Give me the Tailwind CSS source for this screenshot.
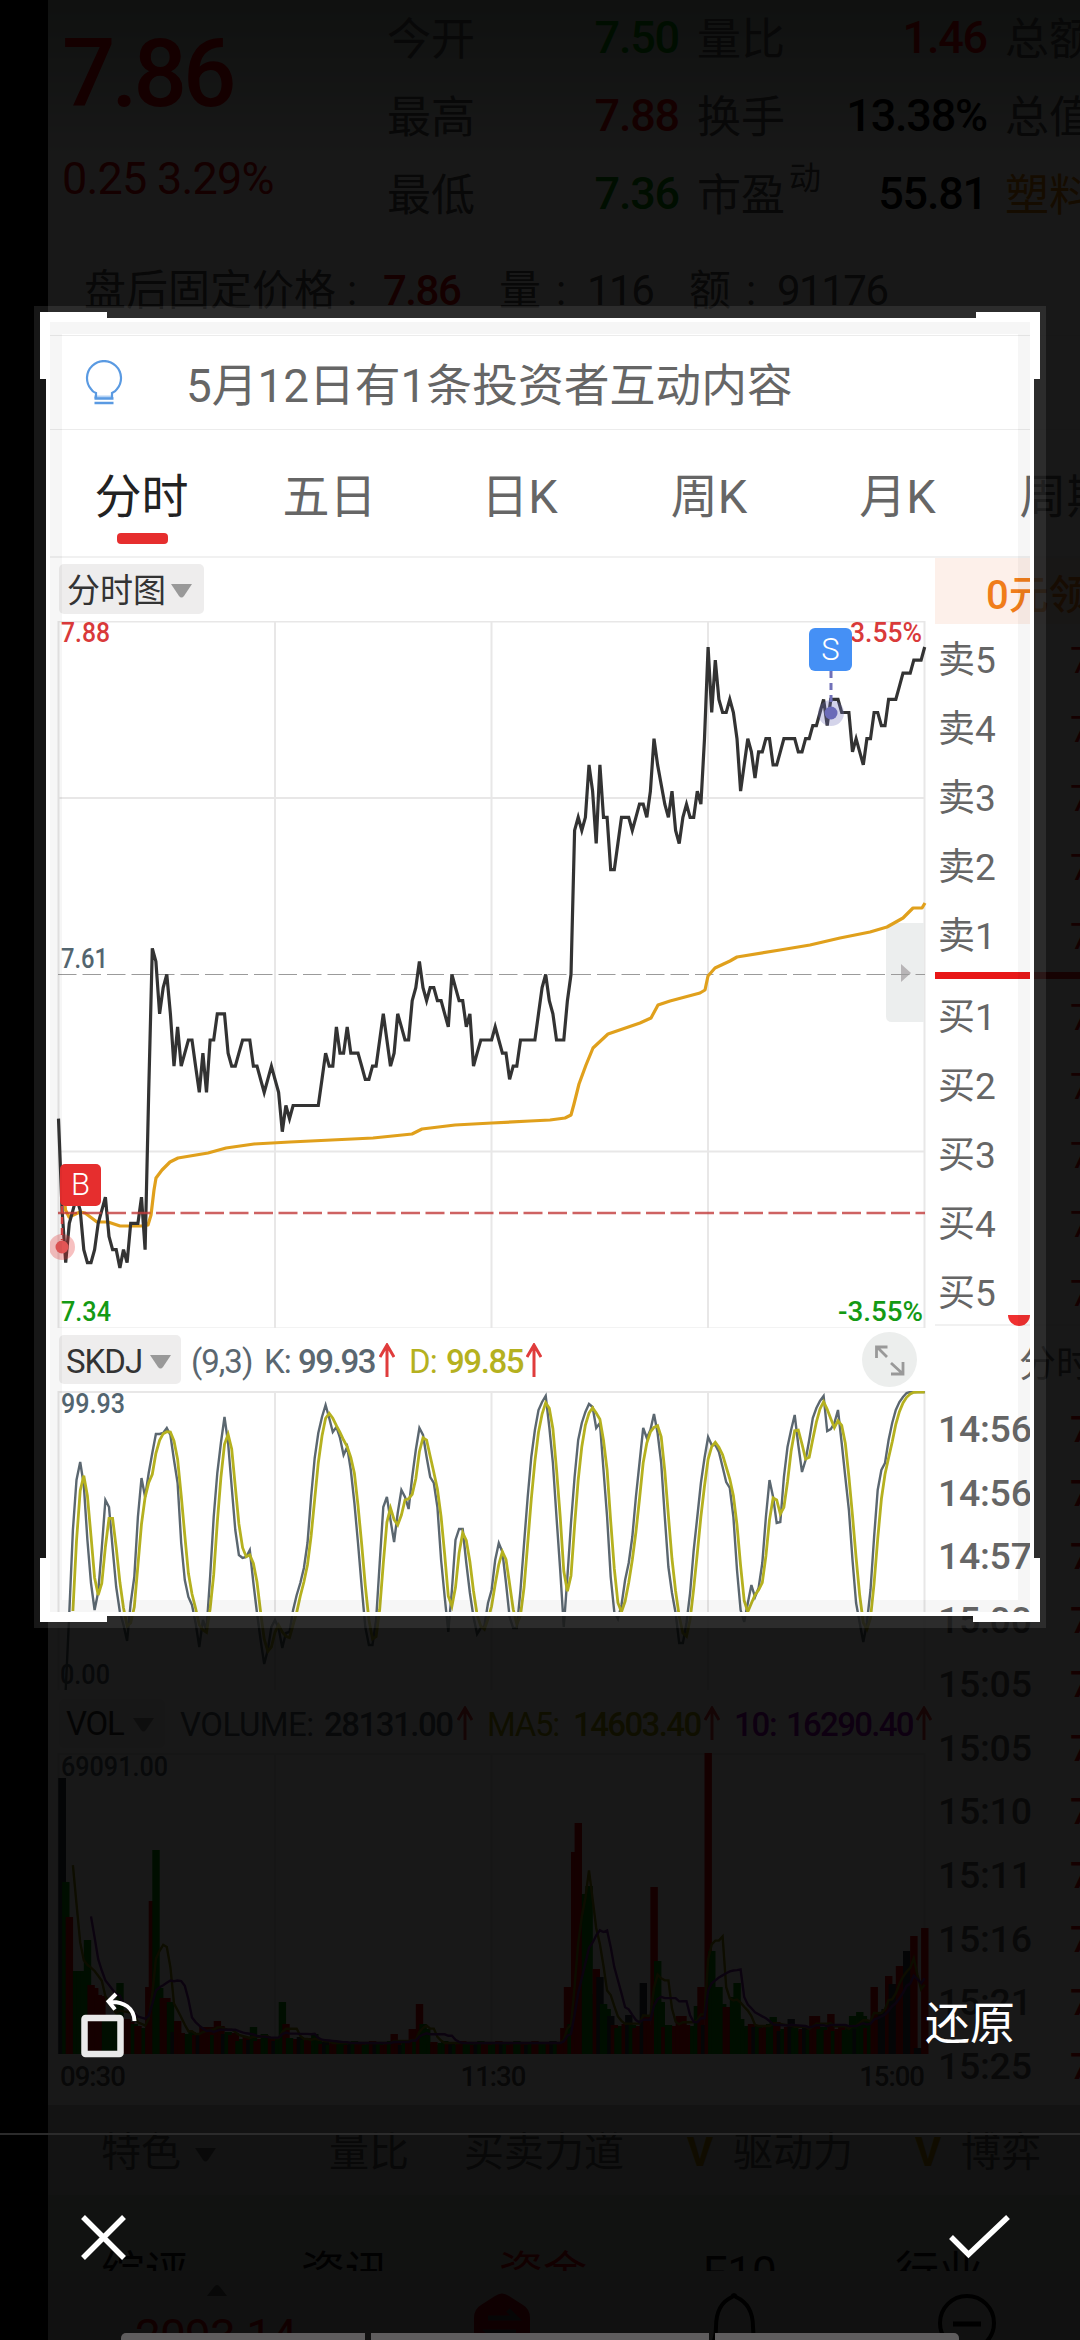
<!DOCTYPE html>
<html lang="zh-CN">
<head>
    <meta charset="UTF-8">
    <meta name="viewport" content="width=device-width, initial-scale=1.0">
    <title>裁剪</title>
    <script src="https://cdn.jsdelivr.net/npm/@tailwindcss/browser@4"></script>
</head>
<body class="bg-black">
<div class="relative w-[1080px] h-[2340px] overflow-hidden bg-black font-['Roboto','Noto_Sans_CJK_SC',sans-serif]">

    <!-- stock page -->
    <div class="ml-12 h-full bg-white flex flex-col whitespace-nowrap overflow-hidden text-[#555]">

        <!-- quote header -->
        <header class="h-[335px] shrink-0 bg-linear-to-b from-[#a4b2a8] to-white to-50%">
            <div class="flex h-[234px]">
                <div class="w-[339px] shrink-0 pl-[14px] text-[#d80000]">
                    <div class="h-[145px] pt-[7px] text-[94px] leading-[135px] font-medium tracking-[-4px]">7.86</div>
                    <div class="text-[45px] leading-[68px] tracking-[-0.8px]">0.25 3.29%</div>
                </div>
                <div class="grid grid-cols-[100px_192px_108px_200px_100px] grid-rows-3 text-[44px] leading-[80px] shrink-0">
                    <span>今开</span><span class="text-right font-medium text-[#009000] text-[45px] tracking-[-1.2px] leading-[76px]">7.50</span><span class="pl-[18px]">量比</span><span class="text-right font-medium text-[#d80000] text-[45px] tracking-[-1.2px] leading-[76px]">1.46</span><span class="pl-[18px]">总额</span>
                    <span>最高</span><span class="text-right font-medium text-[#d80000] text-[45px] tracking-[-1.2px] leading-[76px]">7.88</span><span class="pl-[18px]">换手</span><span class="text-right font-medium text-black text-[45px] tracking-[-1.2px] leading-[76px]">13.38%</span><span class="pl-[18px]">总值</span>
                    <span>最低</span><span class="text-right font-medium text-[#009000] text-[45px] tracking-[-1.2px] leading-[76px]">7.36</span><span class="pl-[18px] flex">市盈<sup class="text-[32px] leading-[44px] top-0 pl-1">动</sup></span><span class="text-right font-medium text-black text-[45px] tracking-[-1.2px] leading-[76px]">55.81</span><span class="pl-[18px] text-[#e08000]">塑料</span>
                </div>
            </div>
            <div class="flex pt-[24px] pl-9 text-[42px] leading-[66px]">
                <span class="w-[263px]">盘后固定价格</span><span class="w-[36px]">:</span>
                <span class="w-[116px] font-medium text-[#d80000] tracking-[-1.5px]">7.86</span>
                <span class="w-[57px]">量</span><span class="w-[31px]">:</span>
                <span class="w-[102px] tracking-[-1.5px]">116</span>
                <span class="w-[57px]">额</span><span class="w-[31px]">:</span>
                <span class="tracking-[-1.5px]">91176</span>
            </div>
        </header>

        <!-- tip -->
        <div class="h-[95px] shrink-0 border-y border-[#ececec] flex items-center">
            <svg class="ml-[37px] w-[38px] h-[46px]" viewBox="85 360 38 46" fill="none" stroke="#5a9ae2" stroke-width="2.200">
                <path d="M94 395.500h18v3H94z" fill="#b4d2f4" stroke="none" />
                <path d="M96 398v-5c-3-1-4-2-5-4A17 17 0 1 1 117 389c-1 2-3 3-5 4v5" />
                <path d="M94.500 398.500H113.500M94.500 403H113.500" stroke-width="2.600" />
            </svg>
            <span class="ml-[63px] pt-[10px] text-[45.800px] text-[#666]">5月12日有1条投资者互动内容</span>
        </div>

        <!-- period tabs -->
        <nav class="h-[128px] shrink-0 border-b-2 border-[#f1f1f1] flex text-[47px] leading-[133px] text-[#666] text-center">
            <div class="w-[187px] shrink-0 relative text-[#222]">分时<i class="absolute left-[69px] top-[103px] w-[51px] h-[11px] rounded-[4px] bg-[#e62e2e]"></i></div>
            <div class="w-[189px] shrink-0">五日</div>
            <div class="w-[191px] shrink-0">日K</div>
            <div class="w-[188px] shrink-0">周K</div>
            <div class="w-[189px] shrink-0">月K</div>
            <div class="w-[149px] shrink-0">周期</div>
        </nav>

        <div class="flex h-[1547px] shrink-0">
            <!-- charts -->
            <div class="w-[887px] shrink-0">
                <div class="h-[63px] pl-[11px] pt-[6px]">
                    <div class="w-[145px] h-[50px] bg-[#eeeded] rounded-[5px] flex items-center pl-2 gap-1 text-[33px] text-[#333]"><span class="pt-1">分时图</span>
                        <svg class="w-[24px] h-[14px] mt-[3px]" viewBox="0 0 24 14"><path d="M1 0h21l-8 12q-2.500 3-5 0z" fill="#999" /></svg>
                    </div>
                </div>
                <svg class="block w-[887px] h-[707px]" viewBox="48 621 887 707" fill="none">
                    <path d="M58.500 621.500H924.500V1328.500H58.500zM58 798H925M58 1151.500H925M275 621V1328M491.500 621V1328M708 621V1328" stroke="#e8e7e7" stroke-width="2" />
                    <path d="M886 929q0-6 6-6h32v99h-32q-6 0-6-6z" fill="#eceeee" />
                    <path d="M901 964l10 9-10 9z" fill="#b8b5b7" />
                    <path d="M58 974.500H925" stroke="#9b9b9b" stroke-width="1.200" stroke-dasharray="18.500 6" />
                    <polyline stroke="#e0a01c" stroke-width="3.200" stroke-linejoin="round" points="64.500,1200 65.500,1210 69,1217 80,1212 85,1213 97,1222 108,1222 120,1226 142,1226 148,1225 151,1215 154,1190 156,1178 162,1170 170,1162 178,1158 208,1153 226,1148 254,1144 290,1142 373,1138 412,1134 422,1129 455,1125 492,1123 530,1121 550,1120 565,1118 571,1115 574,1104 579,1084 586,1065 593,1048 608,1034 640,1023 651,1018 658,1005 670,1001 700,993 705,990 708,976 715,968 730,961 737,957 780,950 810,945 840,938 870,932 887,927 903,918 913,908 922,908 925,903" />
                    <polyline id="price" stroke="#333" stroke-width="3.200" />
                    <path d="M58 1213H925" stroke="#c23b3b" stroke-opacity=".8" stroke-width="2.600" stroke-dasharray="19 5.500" />
                    <g font-size="27.500" font-weight="500">
                        <text x="61" y="642" fill="#d93a3a" textLength="49" lengthAdjust="spacingAndGlyphs">7.88</text>
                        <text x="61" y="968" fill="#53656f" textLength="47" lengthAdjust="spacingAndGlyphs">7.61</text>
                        <text x="61" y="1321" fill="#149a14" textLength="50" lengthAdjust="spacingAndGlyphs">7.34</text>
                        <text x="850" y="642" fill="#d93a3a" textLength="72" lengthAdjust="spacingAndGlyphs">3.55%</text>
                        <text x="838" y="1321" fill="#149a14" textLength="85" lengthAdjust="spacingAndGlyphs">-3.55%</text>
                    </g>
                    <path d="M62 1206v34" stroke="#d04040" stroke-width="2.500" stroke-dasharray="7 4" />
                    <circle cx="62" cy="1247" r="13" fill="#e62e2e" fill-opacity=".3" />
                    <circle cx="62" cy="1247" r="6.500" fill="#e25555" />
                    <rect x="60" y="1164" width="41" height="42" rx="5" fill="#e62e2e" />
                    <text x="80.500" y="1195" font-size="31" font-weight="300" fill="#fff" text-anchor="middle">B</text>
                    <path d="M831 671v36" stroke="#7070b8" stroke-width="3" stroke-dasharray="7 5" />
                    <circle cx="831" cy="713" r="13" fill="#7070b8" fill-opacity=".3" />
                    <circle cx="831" cy="713" r="6.500" fill="#6b6bb8" />
                    <rect x="809" y="628" width="43" height="43" rx="6" fill="#4590f5" />
                    <text x="830.500" y="660" font-size="31" font-weight="300" fill="#fff" text-anchor="middle">S</text>
                </svg>

                <div class="h-[63px] pl-[11px] flex items-center text-[33px] leading-[40px] tracking-[-1px] text-[#5b6770]">
                    <div class="w-[122px] h-[49px] mr-[10px] bg-[#eeeded] rounded-[5px] flex items-center pl-[7px] gap-1 text-[#333]"><span class="w-[79px] pt-1">SKDJ</span>
                        <svg class="w-[24px] h-[14px] mt-[5px]" viewBox="0 0 24 14"><path d="M1 0h21l-8 12q-2.500 3-5 0z" fill="#999" /></svg>
                    </div>
                    <span class="w-[73px] pt-1">(9,3)</span>
                    <span class="w-[34px] pt-1">K:</span>
                    <span class="w-[81px] pt-1 font-medium tracking-[-1.4px]">99.93</span>
                    <svg class="w-[16px] h-[34px] mr-[14px]" viewBox="0 0 16 34" fill="none" stroke="#e03c3c" stroke-width="3"><path d="M8 34V2M1 14L8 2l7 12" /></svg>
                    <span class="w-[37px] pt-1 text-[#b5b11f]">D:</span>
                    <span class="w-[80px] pt-1 font-medium tracking-[-1.4px] text-[#b5b11f]">99.85</span>
                    <svg class="w-[16px] h-[34px]" viewBox="0 0 16 34" fill="none" stroke="#e03c3c" stroke-width="3"><path d="M8 34V2M1 14L8 2l7 12" /></svg>
                    <svg class="w-[55px] h-[55px] ml-auto mr-[18px]" viewBox="0 0 55 55" fill="none" stroke="#999" stroke-width="2.800">
                        <circle cx="27.500" cy="27.500" r="27.500" fill="#eceeed" stroke="none" />
                        <path d="M14.500 26V15h11M15 15l10 10M29 31l12 11M41 30v12H29" />
                    </svg>
                </div>
                <svg class="block w-[887px] h-[299px]" viewBox="48 1391 887 299" fill="none">
                    <path d="M58.500 1690V1392H924.500V1690M275 1391V1690M491.500 1391V1690M708 1391V1690" stroke="#e8e7e7" stroke-width="2" />
                    <text x="61" y="1413" font-size="27.500" font-weight="500" fill="#53656f" textLength="64" lengthAdjust="spacingAndGlyphs">99.93</text>
                    <text x="60" y="1684" font-size="27.500" font-weight="500" fill="#53656f" textLength="50" lengthAdjust="spacingAndGlyphs">0.00</text>
                    <polyline id="k" stroke="#5b6770" stroke-width="2.400" />
                    <polyline id="d" stroke="#b5b11f" stroke-width="2.800" />
                </svg>

                <div class="h-[63px] pl-[11px] pt-[3px] flex items-center text-[33px] leading-[40px] tracking-[-1.3px] text-[#53656f]">
                    <div class="w-[106px] h-[49px] mr-[15px] bg-[#f4eeee] rounded-[5px] flex items-center pl-[7px] gap-1 text-[#333]"><span class="w-[62px] pt-[2px]">VOL</span>
                        <svg class="w-[24px] h-[14px] mt-1" viewBox="0 0 24 14"><path d="M1 0h21l-8 12q-2.500 3-5 0z" fill="#999" /></svg>
                    </div>
                    <span class="w-[144px] pt-[3px] tracking-[-0.500px]">VOLUME:</span>
                    <span class="w-[133px] pt-[3px] font-medium tracking-[-1.500px]">28131.00</span>
                    <svg class="w-[16px] h-[34px] mr-[14px]" viewBox="0 0 16 34" fill="none" stroke="#e03c3c" stroke-width="3"><path d="M8 34V2M1 14L8 2l7 12" /></svg>
                    <span class="w-[86px] pt-[3px] text-[#a09c00]">MA5:</span>
                    <span class="w-[131px] pt-[3px] font-medium tracking-[-1.600px] text-[#a09c00]">14603.40</span>
                    <svg class="w-[16px] h-[34px] mr-[14px]" viewBox="0 0 16 34" fill="none" stroke="#e03c3c" stroke-width="3"><path d="M8 34V2M1 14L8 2l7 12" /></svg>
                    <span class="w-[52px] pt-[3px] font-medium text-[#9000b0]">10:</span>
                    <span class="w-[130px] pt-[3px] font-medium tracking-[-1.700px] text-[#9000b0]">16290.40</span>
                    <svg class="w-[16px] h-[34px]" viewBox="0 0 16 34" fill="none" stroke="#e03c3c" stroke-width="3"><path d="M8 34V2M1 14L8 2l7 12" /></svg>
                </div>
                <svg class="block w-[887px] h-[301px]" viewBox="48 1753 887 301" fill="none">
                    <path d="M58.500 2054V1754H924.500V2054M275 1753V2054M491.500 1753V2054M708 1753V2054" stroke="#e8e7e7" stroke-width="2" />
                    <g id="vol"></g>
                    <polyline id="ma5" stroke="#8a8600" stroke-width="2.400" />
                    <polyline id="ma10" stroke="#7a1fa0" stroke-width="2.400" />
                    <text x="61" y="1776" font-size="27.500" font-weight="500" fill="#53656f" textLength="107" lengthAdjust="spacingAndGlyphs">69091.00</text>
                </svg>
                <div class="h-[50px] pl-3 pr-[11px] pt-[2px] flex justify-between text-[27.500px] tracking-[-1px] font-medium">
                    <span>09:30</span><span class="pl-[2px]">11:30</span><span>15:00</span>
                </div>
            </div>

            <!-- order book -->
            <aside class="w-[145px] shrink-0 relative text-[37px] text-[#666]">
                <div class="h-[66px] bg-[#fdf0ea] pl-[51px] text-[40px] leading-[75px] font-medium text-[#f07d1a]">0元领</div>
                <div class="flex flex-col h-[348px] pt-[2px] leading-[69px] pl-[3px]">
                    <div class="flex justify-between h-[69px]">卖5<span class="w-[10px] text-[#d80000]">7.86</span></div>
                    <div class="flex justify-between h-[69px]">卖4<span class="w-[10px] text-[#d80000]">7.85</span></div>
                    <div class="flex justify-between h-[69px]">卖3<span class="w-[10px] text-[#d80000]">7.84</span></div>
                    <div class="flex justify-between h-[69px]">卖2<span class="w-[10px] text-[#d80000]">7.83</span></div>
                    <div class="flex justify-between h-[69px]">卖1<span class="w-[10px] text-[#d80000]">7.82</span></div>
                </div>
                <div class="h-[7px] bg-[#e81717]"></div>
                <div class="flex flex-col h-[347px] pt-[4px] leading-[69px] pl-[3px] border-b-2 border-[#f1f1f1]">
                    <div class="flex justify-between h-[69px]">买1<span class="w-[10px] text-[#d80000]">7.81</span></div>
                    <div class="flex justify-between h-[69px]">买2<span class="w-[10px] text-[#d80000]">7.80</span></div>
                    <div class="flex justify-between h-[69px]">买3<span class="w-[10px] text-[#d80000]">7.79</span></div>
                    <div class="flex justify-between h-[69px]">买4<span class="w-[10px] text-[#d80000]">7.78</span></div>
                    <div class="flex justify-between h-[69px]">买5<span class="w-[10px] text-[#d80000]">7.77</span></div>
                </div>
                <i class="absolute left-[73px] top-[757px] w-[22px] h-[11px] rounded-b-full bg-[#f03030]"></i>
                <div class="h-[72px] pl-[84px] leading-[78px]">分时</div>
                <div id="ticks" class="pl-[3px] leading-[63.700px] tracking-[-0.300px] text-[37.500px] font-medium"></div>
            </aside>
        </div>

        <!-- indicator shortcuts -->
        <div class="h-[90px] shrink-0 bg-[#c4c8c4] pl-[53px] pt-[5px] flex text-[40px] leading-[85px]">
            <span class="w-[92px]">特色</span>
            <svg class="w-[26px] h-[14px] mt-[38px] mr-[110px]" viewBox="0 0 24 14"><path d="M1 0h21l-8 12q-2.500 3-5 0z" fill="#666" /></svg>
            <span class="w-[135px]">量比</span>
            <span class="w-[223px]">买卖力道</span>
            <span class="w-[46px] font-bold text-[#a88400]">V</span>
            <span class="w-[182px]">驱动力</span>
            <span class="w-[46px] font-bold text-[#a88400]">V</span>
            <span>博弈</span>
        </div>
        <div class="h-[76px] shrink-0 bg-[#b5bab5] overflow-hidden pt-[52px] flex text-[44px] leading-[52px] text-[#111]">
            <span class="w-[200px] pl-[53px] shrink-0">综评</span>
            <span class="w-[200px] pl-[53px] shrink-0">资讯</span>
            <span class="w-[200px] pl-[51px] shrink-0 text-[#c00000]">资金</span>
            <span class="w-[200px] pl-[55px] shrink-0">F10</span>
            <span class="w-[200px] pl-[47px] shrink-0">行业</span>
        </div>
        <div class="h-[69px] shrink-0 bg-[#b0b4b0] overflow-hidden relative">
            <svg class="w-full h-[69px]" viewBox="48 2271 1032 69" fill="none">
                <path d="M207 2296l7-9q3-4 6 0l7 9z" fill="#555" />
                <text x="135" y="2352" font-size="46" fill="#b00000" textLength="162">2093.14</text>
                <path d="M474 2318q0-9 7-13l14-9q7-5 14 0l14 9q7 4 7 13v40h-56z" fill="#a00010" />
                <path d="M488 2318h28l-8-8M516 2332h-28l8 8" stroke="#444" stroke-width="5" />
                <path d="M712 2345q4-6 4-18c0-18 7-26 16-30q2-4 4 0c9 4 17 12 17 30q0 12 4 18" stroke="#000" stroke-width="4" />
                <circle cx="967" cy="2323" r="27" stroke="#000" stroke-width="4" />
                <path d="M953 2324h28" stroke="#000" stroke-width="5" />
            </svg>
        </div>
    </div>

    <!-- crop mask and frame -->
    <div class="absolute left-[46px] top-[318px] w-[988px] h-[1298px] border-4 border-white shadow-[0_0_0_12px_rgba(255,255,255,0.09),0_0_0_3000px_rgba(0,0,0,0.905)]">
        <div class="w-full h-full border-[12px] border-black/[0.035]"></div>
        <i class="absolute -left-[10px] -top-[10px] w-[67px] h-[67px] border-l-[6px] border-t-[6px] border-white"></i>
        <i class="absolute -right-[10px] -top-[10px] w-[64px] h-[67px] border-r-[6px] border-t-[6px] border-white"></i>
        <i class="absolute -left-[10px] -bottom-[10px] w-[67px] h-[64px] border-l-[6px] border-b-[6px] border-white"></i>
        <i class="absolute -right-[10px] -bottom-[10px] w-[67px] h-[64px] border-r-[6px] border-b-[6px] border-white"></i>
    </div>

    <!-- crop tools -->
    <div class="absolute inset-x-0 top-[1986px] h-[149px] border-b-2 border-[#2b2b2b] flex justify-between pl-[78px] pr-[65px]">
        <svg class="w-[62px] h-[76px]" viewBox="78 1986 62 76" fill="none" stroke="#e9e9e9">
            <rect x="84.500" y="2018" width="36" height="36" rx="1" stroke-width="6.500" />
            <path d="M134.500 2021C134 2008 124 2001 109 2002M116 1994l-7.500 7.500 6.500 8" stroke="#fff" stroke-width="4" />
        </svg>
        <span class="text-[45px] leading-[78px] text-white">还原</span>
    </div>
    <div class="absolute inset-x-0 top-[2208px] h-[60px] flex justify-between pl-[76px] pr-[66px]">
        <svg class="w-[56px] h-[60px]" viewBox="76 2208 56 60" fill="none" stroke="#fff" stroke-width="5.500"><path d="M83 2217l41 41M124 2217l-41 41" /></svg>
        <svg class="w-[70px] h-[60px]" viewBox="944 2208 70 60" fill="none" stroke="#fff" stroke-width="5.500"><path d="M951 2237l17.500 17.500L1008 2217" /></svg>
    </div>
    <div class="absolute left-[121px] bottom-0 w-[838px] h-[7px] flex gap-[6px]">
        <i class="w-[244px] bg-[#5f5d5e] rounded-tl-[5px]"></i>
        <i class="w-[338px] bg-[#5f5d5e]"></i>
        <i class="flex-1 bg-[#5f5d5e] rounded-tr-[5px]"></i>
    </div>
</div>

<script>
    const X0 = 58.5, STEP = 3.609;
    const line = (id, ys, from = 0) =>
        document.getElementById(id).setAttribute("points", ys.map((y, i) => (X0 + (i + from) * STEP).toFixed(1) + "," + y.toFixed(1)).join(" "));
    const ma = (a, n) => a.slice(n - 1).map((_, i) => a.slice(i, i + n).reduce((s, v) => s + v, 0) / n);

    // price per minute, in cents relative to 7.61
    const price = [
        -11,-18,-22,-19,-18,-17,-18,-21,-22,-22,-21,-19,-18,-17,-20,-21,-21,-22.4,-21,-22,-19,-19,-19,-17,-21,-9,2,1,-3,-1,
        0,-3,-7,-4,-7,-6,-5,-5,-7,-9,-6,-9,-5,-5,-3,-3,-3,-6,-7,-7,-6,-5,-5,-5,-7,-7,-8,-9,-8,-7,
        -8,-9,-12,-10,-11,-10,-10,-10,-10,-10,-10,-10,-10,-8,-6,-7,-7,-4,-6,-6,-4,-6,-6,-6,-7,-8,-8,-7,-7,-5,
        -3,-5,-7,-6,-3,-4,-5,-5,-2,-1,1,-1,-2,-1,-1,-2,-2,-3,-4,0,-1,-2,-2,-4,-3,-7,-6,-5,-5,-5,
        -5,-4,-5,-6,-6,-8,-7,-7,-5,-5,-5,-5,-5,-3,-1,0,-2,-3,-5,-5,-5,-2,0,11,12,11,12,16,14,10,
        16,12,12,8,8,10,12,12,12,11,12,13,13,12,14,18,16,14.5,13,12,14,11,10,12,13,12,12,14,13,18,
        25,20,24,21,20,20,21,20,18,14,16,18,17,15,17,17,18,18,16,16,17,18,18,18,18,17,17,18,18,19,
        19,20,21,19,21,21,21,20,20,20,17,18,17,16,18,18,20,20,19,19,21,21,21,22,23,23,23,24,24,24,25
    ];
    line("price", price.map(t => 974.5 - t * 13.1));

    // SKDJ: K values as screen heights, D is their 3-point average
    const k = [
        1690,1690,1690,1613,1530,1480,1462,1485,1540,1583,1610,1592,1548,1500,1507,1548,1587,1612,1625,1641,1603,1577,1517,1478,1497,1473,1453,1434,1434,1433,
        1428,1435,1460,1483,1543,1580,1597,1605,1623,1647,1620,1630,1577,1517,1473,1443,1417,1443,1487,1530,1555,1558,1557,1550,1583,1613,1640,1664,1650,1627,
        1620,1628,1648,1633,1632,1610,1595,1583,1568,1543,1497,1458,1433,1417,1405,1418,1432,1427,1438,1455,1447,1470,1503,1543,1587,1627,1645,1645,1620,1563,
        1507,1497,1520,1542,1513,1490,1497,1509,1477,1450,1428,1435,1457,1477,1483,1507,1560,1597,1632,1590,1540,1529,1529,1563,1593,1617,1634,1628,1626,1603,
        1590,1560,1543,1552,1583,1617,1628,1628,1590,1543,1497,1457,1430,1410,1402,1396,1427,1463,1517,1570,1627,1577,1523,1477,1440,1423,1412,1404,1407,1428,
        1423,1470,1517,1577,1612,1619,1605,1580,1563,1537,1497,1463,1428,1438,1430,1414,1433,1463,1517,1567,1593,1613,1643,1643,1623,1593,1550,1517,1483,1458,
        1437,1445,1445,1452,1467,1482,1488,1517,1570,1610,1622,1603,1585,1597,1588,1563,1517,1480,1497,1523,1522,1477,1447,1430,1415,1445,1472,1460,1440,1418,
        1408,1401,1396,1431,1429,1423,1410,1443,1477,1510,1560,1603,1623,1642,1623,1590,1537,1490,1470,1463,1440,1423,1410,1402,1397,1393,1392,1392,1392,1392,1392
    ];
    line("k", k.slice(2), 2);
    line("d", ma(k.slice(2), 3), 4);

    // volume peaks: minute -> [height, colour]; quiet minutes are filled in between
    const R = "#d80000", G = "#009000", S = "#2a3a44";
    const peaks = {
        0:[276,S],1:[276,S],2:[172,G],3:[137,R],4:[83,R],5:[83,G],6:[83,G],7:[83,G],8:[114,G],9:[69,R],10:[66,R],11:[59,R],12:[58,R],13:[37,G],14:[37,G],15:[37,G],16:[35,G],17:[71,G],
        18:[33,R],19:[35,R],20:[32,R],21:[30,G],22:[28,R],23:[26,R],24:[26,G],25:[67,R],26:[153,R],27:[204,G],28:[66,G],29:[56,R],30:[56,R],31:[52,G],33:[33,R],
        40:[27,R],41:[27,R],42:[27,R],44:[33,R],45:[28,R],54:[27,G],57:[20,G],62:[52,G],63:[30,R],71:[20,G],93:[20,R],98:[25,R],100:[50,R],101:[30,G],102:[25,G],
        141:[67,R],143:[202,R],144:[231,R],145:[157,R],146:[160,G],147:[168,G],148:[60,G],149:[85,R],150:[77,S],151:[50,G],152:[45,G],153:[38,S],158:[39,S],
        162:[71,S],163:[37,R],165:[167,R],166:[93,G],167:[52,G],172:[38,R],173:[38,R],177:[48,G],178:[67,R],180:[301,R],181:[103,G],182:[67,G],183:[67,G],
        184:[50,G],185:[47,R],186:[47,R],187:[57,G],188:[71,G],189:[35,G],198:[37,G],199:[32,R],203:[35,S],209:[38,R],210:[38,R],214:[40,R],
        220:[38,G],222:[42,G],223:[38,G],226:[67,R],227:[40,R],228:[40,S],229:[45,S],230:[78,R],231:[70,S],232:[70,S],233:[88,R],234:[80,R],235:[103,S],236:[90,S],237:[118,R],238:[6,S],239:[6,S],240:[126,R]
    };
    const base = m => m < 50 ? 20 : m < 70 ? 15 : m < 140 ? 11 : m < 200 ? 28 : m < 225 ? 25 : 35;
    const vol = [], pen = [R, G, G, R, S, G, R];
    let bars = "";
    for (let m = 0; m <= 240; m++) {
        const [h, c] = peaks[m] || [base(m) + (m * 7) % 5 - 2, pen[m % 7]];
        vol.push(h);
        bars += `<rect x="${(X0 + m * STEP - (m ? 3.6 : 0)).toFixed(1)}" y="${2054 - h}" width="7.4" height="${h}" fill="${c}"/>`;
    }
    document.getElementById("vol").innerHTML = bars;
    line("ma5", ma(vol, 5).map(v => 2054 - v), 4);
    line("ma10", ma(vol, 10).map(v => 2054 - v), 9);

    // trade ticks
    document.getElementById("ticks").innerHTML = ["14:56", "14:56", "14:57", "15:00", "15:05", "15:05", "15:10", "15:11", "15:16", "15:21", "15:25"]
        .map(t => `<div class="flex justify-between">${t}<span class="w-[10px] text-[#d80000]">7.86</span></div>`).join("");
</script>
</body>
</html>
